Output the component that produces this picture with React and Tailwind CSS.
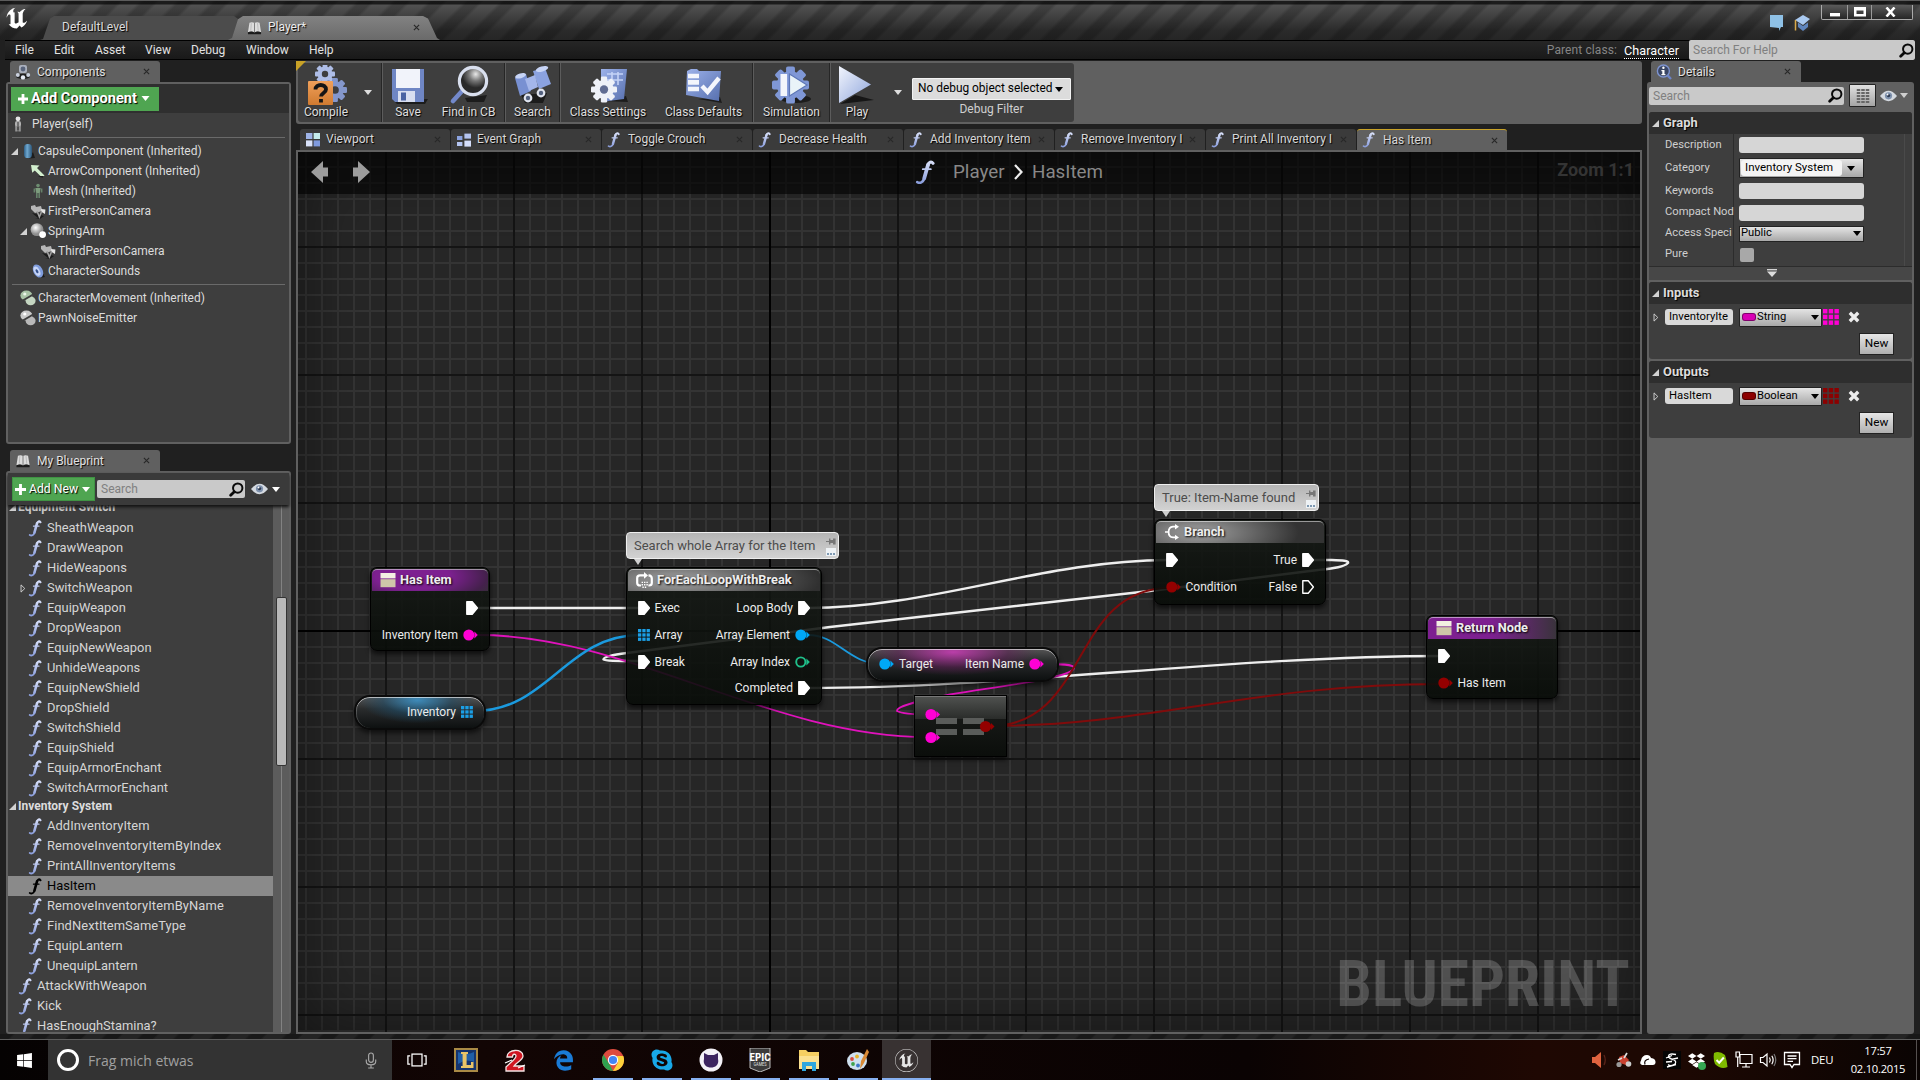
import React from "react";
import { FaWindows, FaEdgeLegacy, FaSkype, FaDropbox } from "react-icons/fa";
import { SiUnrealengine } from "react-icons/si";

/* ---------- small drawings ---------- */
const FnIcon = ({ className = "", black = false }) => (
  <svg viewBox="0 0 14 18" className={`shrink-0 ${className}`} fill="none" stroke={black ? "#000" : "url(#fn)"} strokeLinecap="round">
    <path d="M12.8 2.4C11.6 .8 9.8 1.4 9.2 3.6" strokeWidth="2.2" />
    <path d="M9.2 3.4L6.4 13.4" strokeWidth="2.7" />
    <path d="M6.4 13.4C5.6 16.2 3.4 17 1.4 15.9" strokeWidth="1.9" />
    <path d="M5.4 6.6H11.2" strokeWidth="1.3" />
  </svg>
);
const Tri = ({ className = "" }) => (
  <svg viewBox="0 0 8 8" className={`shrink-0 ${className}`}><path d="M8 0V8H0Z" fill="#d2d2d2" /></svg>
);
const TriClosed = ({ className = "" }) => (
  <svg viewBox="0 0 6 10" className={`shrink-0 ${className}`}><path d="M.8 1V9L5 5Z" fill="none" stroke="#d8d8d8" strokeWidth="1" /></svg>
);
const Down = ({ className = "", color = "#ddd" }) => (
  <svg viewBox="0 0 8 5" className={`shrink-0 ${className}`}><path d="M0 0H8L4 5Z" fill={color} /></svg>
);
const Mag = ({ className = "" }) => (
  <svg viewBox="0 0 16 16" className={`shrink-0 ${className}`} fill="none" stroke="#0a0a0a"><circle cx="9.3" cy="6.5" r="5" strokeWidth="2.1" /><path d="M5.6 10.4L1.8 14.2" strokeWidth="3" strokeLinecap="round" /></svg>
);
const Eye = ({ className = "" }) => (
  <svg viewBox="0 0 18 12" className={`shrink-0 ${className}`}><path d="M0 6Q9 -5 18 6Q9 17 0 6Z" fill="#d4d9e0" /><circle cx="9" cy="5.8" r="3.8" fill="#7d90ac" /><circle cx="9" cy="5.6" r="1.8" fill="#2b3850" /><circle cx="8" cy="4.4" r="1" fill="#fff" /></svg>
);
const Close = ({ className = "" }) => (
  <svg viewBox="0 0 8 8" className={`h-[7px] w-[7px] shrink-0 ${className}`}><path d="M1 1L7 7M7 1L1 7" stroke="#282828" strokeWidth="1.3" /></svg>
);
const Book = ({ className = "" }) => (
  <svg viewBox="0 0 16 16" className={`shrink-0 ${className}`}><path d="M1 13L2.6 3Q5.5 1.6 8 3.2Q10.5 1.6 13.4 3L15 13Q11 11.6 8 13.2Q5 11.6 1 13Z" fill="#dcdcdc" /><path d="M1 13Q5 11.6 8 13.2Q11 11.6 15 13V15.2H1Z" fill="#1c1c1c" /><path d="M8 3.2V13" stroke="#777" strokeWidth="1" /><path d="M4.6 3.4L4 11.4M11.2 3.4L12 11.4" stroke="#b0b0b0" strokeWidth=".8" /></svg>
);
const GearPath = ({ cx, cy, r, fill, hole = "#3e3e3e" }) => (
  <g transform={`translate(${cx} ${cy}) scale(${r / 10})`}>
    {[0, 45, 90, 135].map((a) => <rect key={a} x="-2.4" y="-10" width="4.8" height="20" rx="1" fill={fill} transform={`rotate(${a})`} />)}
    <circle r="7.4" fill={fill} /><circle r="3.2" fill={hole} />
  </g>
);

const SmallIcon = ({ kind, className = "" }) => {
  const body = {
    person: <g><circle cx="8" cy="2.8" r="2.4" fill="#e6e6e6" /><rect x="5" y="5" width="6" height="6" rx="2" fill="#b0b0b0" /><path d="M6.4 10V15.4M9.6 10V15.4" stroke="#949494" strokeWidth="2.4" /><path d="M8 6V14" stroke="#333" strokeWidth="1" /></g>,
    capsule: <g><path d="M9 15.6L15 15L13 9Z" fill="#1d1d1d" /><rect x="4" y="1" width="8" height="14" rx="3.6" fill="url(#cap)" /></g>,
    arrow: <g><path d="M1 2L9.500 2.600L7 5L14.500 12.400L12 14.600L4.800 7.400L2.200 9.800Z" fill="#d3f0cf" /><path d="M8 13H14L12.400 15Z" fill="#1d1d1d" /></g>,
    mesh: <g><circle cx="8" cy="2.600" r="1.800" fill="#6d8d70" /><path d="M5.400 5H10.600L9.800 10H6.200Z" fill="#7d9c7d" /><path d="M4.400 5.400V9.400M11.600 5.400V9.400M6.800 10V15M9.200 10V15" stroke="#66826a" strokeWidth="1.600" /></g>,
    camera: <g><path d="M2 10L8 15H5L10 16L14 13Z" fill="#1b1b1b" /><path d="M1 3L5 2L6 4L11 3L12.400 8L5 10L1 6Z" fill="#b7b7b7" /><path d="M11 6L15.400 6.400L15 11L11.600 9Z" fill="#e6e6e6" /><path d="M7 8L9.400 14L11.400 9" stroke="#a2a2a2" fill="none" strokeWidth="1.500" /></g>,
    spring: <g><circle cx="7" cy="6.600" r="6.400" fill="url(#ball)" /><circle cx="12.600" cy="11.600" r="3.400" fill="#fff" /></g>,
    sound: <g><path d="M9 15L15 14L12 9Z" fill="#1b1b1b" /><ellipse cx="8" cy="8" rx="4.600" ry="7" transform="rotate(-28 8 8)" fill="#7f9cdc" /><ellipse cx="7" cy="8.200" rx="2.800" ry="5" transform="rotate(-28 7 8.200)" fill="#c6d5f8" /><ellipse cx="7" cy="8.200" rx="1.200" ry="2.200" transform="rotate(-28 7 8.200)" fill="#35518c" /></g>,
    move: <g><ellipse cx="6.400" cy="5.600" rx="6" ry="5" fill="#a9c3a6" /><ellipse cx="10.600" cy="10.800" rx="5" ry="4.400" fill="#c5d6c2" /><path d="M2 11L14 4" stroke="#3e3e3e" strokeWidth="2" /><circle cx="4.800" cy="4" r="1.600" fill="#ecf6ea" /></g>,
    noise: <g><ellipse cx="6.400" cy="5.600" rx="6" ry="5" fill="#c9c9c9" /><ellipse cx="10.600" cy="10.800" rx="5" ry="4.400" fill="#b9b9b9" /><path d="M2 11L14 4" stroke="#3e3e3e" strokeWidth="2" /><circle cx="4.800" cy="4" r="1.600" fill="#fff" /></g>,
    components: <g><ellipse cx="8" cy="12.400" rx="7" ry="2.600" fill="#1f1f1f" /><rect x="4" y="1" width="8" height="8" rx="2" fill="#aab0bd" /><circle cx="8" cy="5" r="2.400" fill="#59647c" /><circle cx="2.800" cy="11" r="2" fill="#c9d0dd" /><circle cx="13.200" cy="11" r="2" fill="#c9d0dd" /><circle cx="8" cy="13.400" r="2.200" fill="#e6ebf4" /></g>,
    details: <g><circle cx="7.400" cy="7" r="6" fill="#3a4664" stroke="#7d93cf" strokeWidth="1.400" /><path d="M11.600 11.400L15 15" stroke="#6c84c8" strokeWidth="2.400" /><rect x="6.300" y="6" width="2.200" height="5" fill="#fff" /><rect x="5.400" y="6" width="2" height="1.200" fill="#fff" /><rect x="5.400" y="10" width="4" height="1.200" fill="#fff" /><circle cx="7.400" cy="3.800" r="1.200" fill="#fff" /></g>,
    viewport: <g><rect x="1" y="1" width="6.400" height="6" fill="#9fb4e8" /><rect x="8.600" y="1" width="6.400" height="6" fill="#c4ecec" /><rect x="1" y="8.400" width="6.400" height="6" fill="#d9e2fa" /><rect x="8.600" y="8.400" width="6.400" height="6" fill="#7f9ade" /></g>,
    graph: <g><rect x="1" y="4" width="5.400" height="4" fill="#8ba3e0" /><rect x="8.400" y="1.600" width="6.600" height="5" fill="#b4c4f0" /><rect x="1" y="10" width="5.400" height="4" fill="#b4c4f0" /><rect x="8.400" y="8.600" width="6.600" height="6" fill="#d5defa" /></g>,
  }[kind];
  return <svg viewBox="0 0 16 16" className={`h-4 w-4 shrink-0 ${className}`}>{body}</svg>;
};

const ToolIcon = ({ kind }) => {
  const body = {
    compile: <g><GearPath cx={21} cy={9} r={10} fill="#aebde6" /><GearPath cx={31} cy={25} r={12} fill="#8497cc" /><rect x="4" y="16" width="25" height="24" rx="1" fill="url(#org)" /><path d="M11.500 24.500C11.500 18.500 22 18.500 22 24.500C22 28 17 28 17 31.600M17 34V37.600" stroke="#151515" strokeWidth="3.800" fill="none" /></g>,
    save: <g><path d="M7 35L42 34L39 39H11Z" fill="#1c1c1c" /><path d="M6 4H38V37H9L6 34Z" fill="#6f86c4" /><rect x="10" y="4" width="24" height="19" fill="#f1f3fa" /><rect x="12" y="26" width="17" height="11" fill="#d8def0" /><rect x="15" y="27.500" width="5" height="8" fill="#4a62a2" /></g>,
    find: <g><path d="M18 33L40 30L37 37L20 37Z" fill="#1c1c1c" /><path d="M16 25L6 36" stroke="#7389cb" strokeWidth="4.600" strokeLinecap="round" /><circle cx="26" cy="16" r="13.600" fill="url(#lens)" stroke="#d9dfee" strokeWidth="3.200" /></g>,
    search: <g><path d="M10 30L36 28L32 38H14Z" fill="#1c1c1c" /><path d="M4 13L15 9L20 26L9 31Z" fill="#7890d2" /><path d="M22 6L34 3L40 19L28 24Z" fill="#8ba2e0" /><path d="M14 14L24 10L27 22L18 26Z" fill="#a4b6ea" /><ellipse cx="31" cy="4" rx="6.400" ry="2.600" fill="#c7d4f6" transform="rotate(-16 31 4)" /><ellipse cx="9.600" cy="11" rx="5.600" ry="2.400" fill="#c7d4f6" transform="rotate(-16 9 11)" /><circle cx="17" cy="33" r="4.400" fill="#dfe3ee" /><circle cx="17" cy="33" r="2.200" fill="#53617f" /><circle cx="30" cy="28" r="4.400" fill="#dfe3ee" /><circle cx="30" cy="28" r="2.200" fill="#53617f" /></g>,
    settings: <g><path d="M18 36L42 37L40 31Z" fill="#1c1c1c" /><path d="M15 4H41L38 34L15 37Z" fill="url(#blu)" /><path d="M21 9H37M21 15H37M26 7V20M32 7V20" stroke="#c5d3f7" strokeWidth="1.600" /><GearPath cx={18} cy={24.500} r={13} fill="#eef1f8" hole="#606c92" /></g>,
    defaults: <g><path d="M16 34L40 38L38 32Z" fill="#1c1c1c" /><path d="M5 6L9 4L15 4L17 6H39L37 36L4 30Z" fill="url(#blu)" /><path d="M6 11H17M6 17.400H17M6 24H17" stroke="#f4f6fc" strokeWidth="4.600" /><path d="M20 21L25.600 27L37 13" stroke="#f4f6fc" strokeWidth="4.400" fill="none" /></g>,
    sim: <g><ellipse cx="26" cy="34" rx="15" ry="4" fill="#1c1c1c" /><GearPath cx={20.5} cy={20} r={18.5} fill="#7f97d6" hole="#7f97d6" /><rect x="10.500" y="9" width="6.600" height="22" fill="#f3f5fb" /><path d="M19.500 9L37 20L19.500 31Z" fill="#e9f3f8" stroke="#5d76b6" strokeWidth="1.200" /></g>,
    play: <g><path d="M5 39L20 30L39 35Z" fill="#161616" /><path d="M4 1L36 19.500L4 38Z" fill="url(#ply)" /></g>,
  }[kind];
  return <svg viewBox="0 0 44 40" className="h-[40px] w-[44px]">{body}</svg>;
};

const Tool = ({ kind, label, className }) => (
  <div className={`flex h-full shrink-0 flex-col items-center pt-[2px] ${className}`}>
    <ToolIcon kind={kind} />
    <span className="text-[12px] leading-[14px] whitespace-nowrap text-[#dedede] [text-shadow:1px_1px_1px_#000]">{label}</span>
  </div>
);
const Sep = () => <div className="h-full w-[2px] shrink-0 border-r border-[#5c5c5c] bg-[#262626]" />;

/* ---------- left column ---------- */
const PanelTab = ({ icon, label }) => (
  <div className="ml-1 flex h-[21px] w-[150px] items-center rounded-t-[3px] bg-[#606060] pl-[5px]">
    {icon}
    <span className="ml-[6px] flex-1 text-[12px] leading-[16px] text-[#e2e2e2] [text-shadow:1px_1px_1px_#000]">{label}</span>
    <Close className="mr-[10px]" />
  </div>
);

const components = [
  { kind: "arrow", label: "ArrowComponent (Inherited)", pad: "pl-[22px]" },
  { kind: "mesh", label: "Mesh (Inherited)", pad: "pl-[22px]" },
  { kind: "camera", label: "FirstPersonCamera", pad: "pl-[22px]" },
  { kind: "spring", label: "SpringArm", pad: "pl-[12px]", open: true },
  { kind: "camera", label: "ThirdPersonCamera", pad: "pl-[32px]" },
  { kind: "sound", label: "CharacterSounds", pad: "pl-[22px]" },
];

const ComponentsPanel = () => (
  <div className="flex h-[362px] flex-col rounded-[3px] border-2 border-[#606060] bg-[#3e3e3e] text-[12px] text-[#dcdcdc]">
    <div className="flex h-[29px] shrink-0 items-center bg-[#2f2f2f] pl-[3px]">
      <div className="flex h-[24px] w-[148px] items-center bg-[#4fa551] pl-[7px] text-[14.600px] font-bold text-white [text-shadow:1px_1px_1px_#000]">
        <svg viewBox="0 0 10 10" className="mr-[3px] h-[10px] w-[10px]"><path d="M5 0V10M0 5H10" stroke="#fff" strokeWidth="2.800" /></svg>
        Add Component
        <Down className="ml-[4px] h-[5px] w-[9px]" color="#fff" />
      </div>
    </div>
    <div className="flex h-[24px] shrink-0 items-center pb-[2px] pl-[2px]"><SmallIcon kind="person" /><span className="ml-[6px]">Player(self)</span></div>
    <div className="mx-[4px] h-px shrink-0 bg-[#6a6a6a]" />
    <div className="mt-[3px] flex h-[20px] shrink-0 items-center pl-[3px]"><Tri className="h-[7px] w-[7px]" /><SmallIcon kind="capsule" className="ml-[2px]" /><span className="ml-[2px]">CapsuleComponent (Inherited)</span></div>
    {components.map((c, i) => (
      <div key={i} className={`flex h-[20px] shrink-0 items-center ${c.pad}`}>
        {c.open && <Tri className="mr-[3px] h-[7px] w-[7px]" />}
        <SmallIcon kind={c.kind} /><span className="ml-[2px]">{c.label}</span>
      </div>
    ))}
    <div className="mx-[4px] mt-[3px] h-px shrink-0 bg-[#6a6a6a]" />
    <div className="mt-[3px] flex h-[20px] shrink-0 items-center pl-[12px]"><SmallIcon kind="move" /><span className="ml-[2px]">CharacterMovement (Inherited)</span></div>
    <div className="flex h-[20px] shrink-0 items-center pl-[12px]"><SmallIcon kind="noise" /><span className="ml-[2px]">PawnNoiseEmitter</span></div>
  </div>
);

const equipFns = ["SheathWeapon", "DrawWeapon", "HideWeapons", "SwitchWeapon", "EquipWeapon", "DropWeapon", "EquipNewWeapon", "UnhideWeapons", "EquipNewShield", "DropShield", "SwitchShield", "EquipShield", "EquipArmorEnchant", "SwitchArmorEnchant"];
const invFns = ["AddInventoryItem", "RemoveInventoryItemByIndex", "PrintAllInventoryItems", "HasItem", "RemoveInventoryItemByName", "FindNextItemSameType", "EquipLantern", "UnequipLantern"];
const track = { RemoveInventoryItemByIndex: "tracking-[.16px]", RemoveInventoryItemByName: "tracking-[.14px]", PrintAllInventoryItems: "tracking-[.08px]", AddInventoryItem: "tracking-[.06px]", FindNextItemSameType: "tracking-[.08px]" };

const FnRow = ({ name, root = false }) => {
  const sel = name === "HasItem";
  return (
    <div className={`flex h-[20px] shrink-0 items-center ${root ? "pl-[10px]" : "pl-[12px]"} ${sel ? "bg-[#8a8a8a] text-black" : ""}`}>
      {!root && <span className="w-[8px]">{name === "SwitchWeapon" && <TriClosed className="h-[9px] w-[6px]" />}</span>}
      <FnIcon className="h-[17px] w-[14px]" black={sel} />
      <span className={`ml-[5px] ${track[name] || ""}`}>{name}</span>
    </div>
  );
};

const SearchBox = ({ className, label }) => (
  <div className={`flex items-center justify-between rounded-[2px] bg-[#c9c9c9] pr-px pl-[4px] text-[12px] text-[#808080] ${className}`}>{label}<Mag className="h-[15px] w-[15px]" /></div>
);

const BlueprintPanel = () => (
  <div className="flex h-[563px] flex-col rounded-[3px] border-2 border-[#606060] bg-[#3e3e3e]">
    <div className="z-10 flex h-[32px] shrink-0 items-center bg-[#3a3a3a] pl-[4px] shadow-[0_2px_3px_#111]">
      <div className="flex h-[24px] w-[83px] items-center border border-[#3f9343] bg-[#4fa551] pl-[2px] text-[12px] text-white [text-shadow:1px_1px_1px_#000]">
        <svg viewBox="0 0 10 10" className="mr-[3px] h-[11px] w-[11px]"><path d="M5 0V10M0 5H10" stroke="#fff" strokeWidth="2.600" /></svg>
        <span className="text-[12.200px] whitespace-nowrap">Add New</span>
        <Down className="ml-[4px] h-[5px] w-[8px]" color="#fff" />
      </div>
      <SearchBox label="Search" className="ml-[2px] h-[18px] w-[148px]" />
      <Eye className="ml-[6px] h-[12px] w-[17px]" />
      <Down className="ml-[4px] h-[5px] w-[8px]" color="#fff" />
    </div>
    <div className="flex min-h-0 flex-1 overflow-hidden">
      <div className="flex w-[265px] flex-col overflow-hidden text-[12.900px] text-[#d6d6d6]">
        <div className="mt-[-9px] flex h-[22px] shrink-0 items-center pl-px text-[12px] font-bold text-[#c9c9c9]"><Tri className="mr-[2px] h-[7px] w-[7px]" />Equipment Switch</div>
        {equipFns.map((n) => <FnRow key={n} name={n} />)}
        <div className="-mt-px mb-px flex h-[18px] shrink-0 items-center pl-px text-[12px] font-bold text-[#dcdcdc]"><Tri className="mr-[2px] h-[7px] w-[7px]" />Inventory System</div>
        {invFns.map((n) => <FnRow key={n} name={n} />)}
        {["AttackWithWeapon", "Kick", "HasEnoughStamina?"].map((n) => <FnRow key={n} name={n} root />)}
      </div>
      <div className="flex flex-1 flex-col bg-[linear-gradient(90deg,#5c5c5c_8px,#828282_8px,#828282_9px,#5c5c5c_9px)] pt-[92px] pl-[3px]">
        <div className="h-[169px] w-[11px] rounded-[2px] border border-[#333] bg-[#b9b9b9]" />
      </div>
    </div>
  </div>
);

/* ---------- graph ---------- */
const ExecPin = ({ hollow = false }) => (
  <svg viewBox="0 0 12 14" className="h-[14px] w-[12px] shrink-0"><path d="M.8 .8H6.200L11.400 7L6.200 13.200H.8Z" fill={hollow ? "none" : "#fff"} stroke="#fff" strokeWidth="1.400" strokeLinejoin="round" /></svg>
);
const Pin = ({ color, hollow = false }) => (
  <svg viewBox="0 0 15 12" className="h-[12px] w-[15px] shrink-0"><circle cx="5.800" cy="6" r={hollow ? 4.6 : 5.5} fill={hollow ? "none" : color} stroke={hollow ? color : "none"} strokeWidth="1.900" /><path d="M11.400 2.600L14.800 6L11.400 9.400Z" fill={color} /></svg>
);
const ArrayPin = ({ color = "#1b9fe6", className = "h-[12px] w-[12px]" }) => (
  <svg viewBox="0 0 12 12" className={`shrink-0 ${className}`}>{[0, 4.3, 8.6].map((y) => [0, 4.3, 8.6].map((x) => <rect key={x + "-" + y} x={x} y={y} width="3.300" height="3.300" fill={color} />))}</svg>
);
const MAG = "#ff00d4", BLUE = "#00a8f6", RED = "#940000";

const Row = ({ children }) => <div className="flex h-[26.700px] items-center justify-between pr-[11px] pl-[10.500px]">{children}</div>;
const In = ({ children }) => <div className="flex items-center gap-[5px]">{children}</div>;

const Node = ({ className, header, icon, title, children }) => (
  <div className={`absolute overflow-hidden rounded-[7px] border border-black bg-[linear-gradient(180deg,rgba(22,26,22,.88),rgba(8,12,8,.9))] shadow-[0_3px_5px_rgba(0,0,0,.65)] ${className}`}>
    <div className={`mx-px mt-px flex h-[22px] items-center rounded-t-[5px] border-t border-white/50 pb-[2px] pl-[8px] ${header}`}>
      {icon}<span className="ml-[4px] text-[12.800px] leading-[18px] font-bold whitespace-nowrap text-[#eee] [text-shadow:1px_1px_2px_#000]">{title}</span>
    </div>
    <div className="pt-[4px]">{children}</div>
  </div>
);
const FnBox = () => <svg viewBox="0 0 16 16" className="h-[16px] w-[16px] shrink-0"><rect x=".5" y="1" width="15" height="5.400" fill="#f3efe2" /><rect x=".5" y="7.200" width="15" height="8" fill="#cfc6a9" /></svg>;
const LoopIcon = () => <svg viewBox="0 0 17 16" className="h-[16px] w-[17px] shrink-0" fill="none" stroke="#fff" strokeWidth="2.200"><path d="M5 13.500H4Q1.200 13.500 1.200 11V6Q1.200 3.400 4 3.400H8" /><path d="M8 0L12 3.400L8 6.800Z" fill="#fff" stroke="none" /><path d="M12.500 3.400Q15.800 3.600 15.800 6.400V11Q15.800 13.500 13 13.500H12.400" /><path d="M5.600 10.400H12M5.600 12.800H12M6.400 15.200H11" strokeDasharray="1.400 1" strokeWidth="1.400" /></svg>;
const BranchIcon = () => <svg viewBox="0 0 16 16" className="h-[16px] w-[16px] shrink-0" fill="none" stroke="#fff" strokeWidth="1.700"><path d="M1 8H5M12 2.600H9Q4.600 3 4.600 8Q4.600 13 9 13.400H12" /><path d="M11 0L15 2.700L11 5.400ZM11 10.700L15 13.400L11 16Z" fill="#fff" stroke="none" /></svg>;

const Bubble = ({ className, children }) => (
  <div className={`absolute flex h-[27px] items-center rounded-[4px] border border-[#eee] bg-[linear-gradient(180deg,#b4b4b4,#d2d2d2)] pl-[7px] text-[13px] whitespace-nowrap text-[#4c4c4c] ${className}`}>
    {children}
    <svg viewBox="0 0 10 20" className="absolute top-[4px] right-[2px] h-[20px] w-[10px]"><path d="M0 4.500H3.500" stroke="#777" strokeWidth="1" /><path d="M3 1.500H4.400V3H7V1.500H9.600V7.500H7V6H4.400V7.500H3Z" fill="#777" /><rect x="0" y="11" width="10" height="8" fill="#eef2f5" /><path d="M1 17H9" stroke="#5a7c9c" strokeWidth="1.600" strokeDasharray="2 1" /></svg>
    <svg viewBox="0 0 8 6" className="absolute top-[26px] left-[7px] h-[6px] w-[8px]"><path d="M0 0H8L4 6Z" fill="#cfcfcf" /></svg>
  </div>
);

const Pill = ({ className, glow, children }) => (
  <div className={`absolute flex h-[35px] items-center rounded-[16px] border-2 border-[#0a0a0a] pb-[2px] shadow-[0_3px_5px_rgba(0,0,0,.6),inset_0_1px_0_rgba(255,255,255,.6),inset_1px_0_0_rgba(255,255,255,.2)] ${glow} ${className}`}>{children}</div>
);

const Wires = () => (
  <svg viewBox="0 0 1920 1080" className="absolute top-0 left-0 h-[1080px] w-[1920px]" fill="none">
    <g stroke="#eee" strokeWidth="2.400">
      <path d="M476 608H640" />
      <path d="M808 608C930 608 1045 560 1168 560" />
      <path d="M1313 560H1330C1342 560.400 1349 560.500 1348 563C1344 567 1335 568 1318 570L1154 590.500L830 627C740 638 690 645 627 653C612 655 603 657 603.500 659.500C605 661 615 661 640 661" />
      <path d="M808 688C1010 688 1230 656 1443 656" />
    </g>
    <g stroke="#e012bc" strokeWidth="1.800">
      <path d="M478 635C630 635 770 737 928 737" />
      <path d="M1041 664C1060 664 1074 664 1074 668C1072 678 1000 686 950 694.500C918 701 896 706 897 711C902 714 912 714.500 930 714.500" />
    </g>
    <path d="M474 711C548 711 566 635 640 635" stroke="#1b9ade" strokeWidth="2.400" />
    <path d="M808 635C838 635 848 664 882 664" stroke="#1b9ade" strokeWidth="1.800" />
    <g stroke="#800b0b" strokeWidth="2">
      <path d="M990 726C1090 726 1070 588 1170 588" />
      <path d="M990 726C1150 726 1250 684 1443 684" />
    </g>
  </svg>
);

const Graph = () => (
  <div className="relative min-h-0 flex-1 overflow-hidden border-2 border-[#606060] bg-[#262626]">
    <div className="absolute inset-0 bg-[linear-gradient(90deg,#141414_2px,transparent_2px),linear-gradient(180deg,#141414_2px,transparent_2px),linear-gradient(90deg,#343434_2px,transparent_2px),linear-gradient(180deg,#343434_2px,transparent_2px)] [background-position:87px_0,0_94px,7px_0,0_14px] [background-size:128px_128px,128px_128px,16px_16px,16px_16px]" />
    <div className="absolute inset-y-0 left-[471px] w-[2px] bg-black" />
    <div className="absolute inset-x-0 top-[478px] h-[2px] bg-black" />
    <div className="absolute inset-0 shadow-[inset_0_0_70px_rgba(0,0,0,.5)]" />
    <div className="absolute right-[10px] bottom-[15px] origin-right scale-x-[.992] font-['Roboto_Condensed',Roboto,sans-serif] text-[64px] leading-[64px] font-bold text-white/20">BLUEPRINT</div>

    <div className="absolute top-[-152px] left-[-298px] h-[1080px] w-[1920px] text-[12px] whitespace-nowrap text-[#ececec]">
      <Wires />
      <Node className="top-[567px] left-[370px] h-[84px] w-[120px]" header="bg-[radial-gradient(ellipse_80%_160%_at_35%_30%,#7d2090_40%,#44204c_80%,#333_100%)]" icon={<FnBox />} title="Has Item">
        <Row><span /><ExecPin /></Row>
        <Row><span /><In>Inventory Item<Pin color={MAG} /></In></Row>
      </Node>
      <Node className="top-[567px] left-[626px] h-[138px] w-[196px]" header="bg-[radial-gradient(ellipse_75%_160%_at_25%_50%,#8c8c8c_20%,#505050_70%,#303030_100%)]" icon={<LoopIcon />} title="ForEachLoopWithBreak">
        <Row><In><ExecPin />Exec</In><In>Loop Body<ExecPin /></In></Row>
        <Row><In><ArrayPin />Array</In><In>Array Element<Pin color={BLUE} /></In></Row>
        <Row><In><ExecPin />Break</In><In>Array Index<Pin color="#1fc08a" hollow /></In></Row>
        <Row><span /><In>Completed<ExecPin /></In></Row>
      </Node>
      <Node className="top-[519px] left-[1154px] h-[86px] w-[172px]" header="bg-[radial-gradient(ellipse_60%_160%_at_25%_50%,#8c8c8c_20%,#4a4a4a_80%,#333_100%)]" icon={<BranchIcon />} title="Branch">
        <Row><ExecPin /><In>True<ExecPin /></In></Row>
        <Row><In><Pin color={RED} />Condition</In><In>False<ExecPin hollow /></In></Row>
      </Node>
      <Node className="top-[615px] left-[1426px] h-[84px] w-[132px]" header="bg-[linear-gradient(90deg,#7d2090_50%,#3a333c_100%)]" icon={<FnBox />} title="Return Node">
        <Row><ExecPin /></Row>
        <Row><In><Pin color={RED} />Has Item</In></Row>
      </Node>
      <Pill className="top-[695px] left-[354px] w-[132px] justify-end gap-[5px] pr-[11px]" glow="bg-[radial-gradient(ellipse_45%_75%_at_48%_10%,rgba(60,150,205,.85),rgba(30,80,110,.5)_60%,transparent),linear-gradient(180deg,#555_0,#2a2c2d_38%,#0d1010_100%)]">Inventory<ArrayPin /></Pill>
      <Pill className="top-[647px] left-[866px] w-[193px] justify-between pr-[13px] pl-[11px]" glow="bg-[radial-gradient(ellipse_45%_75%_at_45%_10%,rgba(205,60,185,.85),rgba(100,30,90,.5)_65%,transparent),linear-gradient(180deg,#555_0,#2a2c2d_38%,#0d1010_100%)]">
        <In><Pin color={BLUE} />Target</In><In>Item Name<Pin color={MAG} /></In>
      </Pill>
      <div className="absolute top-[695px] left-[914px] h-[62px] w-[93px] border border-black bg-[linear-gradient(180deg,#505250_0,#2a2c2a_38%,#161816_39%,#0b0e0b_100%)] shadow-[0_3px_5px_rgba(0,0,0,.6),inset_0_1px_0_#777]">
        <svg viewBox="0 0 93 62" className="absolute top-[-1px] left-[-1px] h-[62px] w-[93px]">
          <path d="M22 26H43M49 26H70M22 37H43M49 37H70" stroke="#5a5c5a" strokeWidth="6" />
          <circle cx="17" cy="19.500" r="5.600" fill={MAG} /><path d="M22.500 16L26 19.500L22.500 23Z" fill={MAG} />
          <circle cx="17" cy="42.500" r="5.600" fill={MAG} /><path d="M22.500 39L26 42.500L22.500 46Z" fill={MAG} />
          <circle cx="71.500" cy="31.500" r="5.600" fill={RED} /><path d="M77 28L80.500 31.500L77 35Z" fill={RED} />
        </svg>
      </div>
      <Bubble className="top-[532px] left-[626px] w-[213px]">Search whole Array for the Item</Bubble>
      <Bubble className="top-[484px] left-[1154px] w-[165px]">True: Item-Name found</Bubble>
    </div>

    <div className="relative flex h-[42px] items-center bg-black/60 pb-[2px] text-[18.800px] text-[#888]">
      <svg viewBox="0 0 64 24" className="ml-[12px] h-[24px] w-[64px] shrink-0"><path d="M1 12L13 1V7.500H18V16.500H13V23Z" fill="#9c9c9c" /><path d="M60 12L48 1V7.500H43V16.500H48V23Z" fill="#9c9c9c" /></svg>
      <FnIcon className="ml-[541px] h-[25px] w-[20px]" />
      <span className="ml-[18px] w-[54px]">Player</span>
      <svg viewBox="0 0 10 16" className="ml-[6px] h-[16px] w-[11px]"><path d="M1.500 1L8 8L1.500 15" stroke="#eee" strokeWidth="2.200" fill="none" /></svg>
      <span className="ml-[8px] flex-1">HasItem</span>
      <span className="mr-[6px] -mt-[5px] text-[18px] font-bold text-[#343434]">Zoom 1:1</span>
    </div>
  </div>
);

/* ---------- centre ---------- */
const tabs = ["Viewport", "Event Graph", "Toggle Crouch", "Decrease Health", "Add Inventory Item", "Remove Inventory I", "Print All Inventory I", "Has Item"];
const Centre = () => (
  <div className="flex w-[1346px] flex-col">
    <div className="flex h-[63px] shrink-0 rounded-[3px] bg-[#606060] p-[2px]">
      <div className="relative flex h-[59px] w-[776px] rounded-[3px] bg-[#3e3e3e]">
        <svg viewBox="0 0 10 10" className="absolute top-[-2px] left-[-2px] h-[10px] w-[10px]"><path d="M0 0H10L0 10Z" fill="#c9a227" /></svg>
        <Tool kind="compile" label="Compile" className="w-[56px]" />
        <div className="flex w-[27px] items-center justify-center"><Down className="h-[5px] w-[8px]" /></div>
        <Sep />
        <Tool kind="save" label="Save" className="w-[50px]" />
        <Tool kind="find" label="Find in CB" className="w-[71px]" />
        <Sep />
        <Tool kind="search" label="Search" className="w-[53px]" />
        <Sep />
        <Tool kind="settings" label="Class Settings" className="w-[94px]" />
        <Tool kind="defaults" label="Class Defaults" className="w-[97px]" />
        <Sep />
        <Tool kind="sim" label="Simulation" className="w-[75px]" />
        <Sep />
        <Tool kind="play" label="Play" className="w-[52px]" />
        <div className="flex w-[29px] items-center justify-center"><Down className="h-[5px] w-[8px]" /></div>
        <div className="flex flex-col items-center pt-[15px]">
          <div className="flex h-[22px] w-[159px] items-center rounded-[1px] border border-[#f2f2f2] bg-[#dcdcdc] pl-[5px] text-[11.900px] whitespace-nowrap text-black">No debug object selected<Down className="ml-[2px] h-[5px] w-[8px]" color="#000" /></div>
          <span className="mt-[2px] text-[12px] leading-[14px] text-[#cfcfcf]">Debug Filter</span>
        </div>
      </div>
    </div>
    <div className="flex h-[26px] shrink-0 items-end pl-[4px]">
      {tabs.map((t, i) => {
        const on = i === 7;
        return (
          <div key={t} className={`mr-px flex h-[21px] w-[150px] shrink-0 items-center rounded-t-[3px] pl-[5px] ${on ? "border-t border-[#c9a227] bg-[#606060]" : "bg-[#3b3b3b]"}`}>
            {i < 2 ? <SmallIcon kind={i ? "graph" : "viewport"} className="mr-[5px]" /> : <FnIcon className="mr-[8px] h-[16px] w-[13px]" />}
            <span className="w-[105px] pb-px text-[12px] leading-[16px] whitespace-nowrap text-[#d8d8d8] [text-shadow:1px_1px_1px_#000]">{t}</span>
            <Close className="ml-[3px]" />
          </div>
        );
      })}
    </div>
    <Graph />
  </div>
);

/* ---------- details ---------- */
const SectionHead = ({ children }) => (
  <div className="flex h-[22px] shrink-0 items-center rounded-t-[3px] bg-[#2e2e2e] pl-[3px] text-[12.900px] font-bold text-[#dcdcdc] [text-shadow:1px_1px_1px_#000]"><Tri className="mr-[4px] h-[7px] w-[7px]" />{children}</div>
);
const Field = ({ label, h, children }) => (
  <div className={`flex items-center ${h}`}>
    <span className="w-[84px] pl-[16px] whitespace-nowrap">{label}</span>
    <div className="ml-[6px]">{children}</div>
  </div>
);
const Blank = () => <div className="h-[16px] w-[125px] rounded-[3px] bg-[#d6d6d6]" />;
const Param = ({ name, type, color, pill }) => (
  <div className="flex h-[56px] flex-col">
    <div className="flex h-[26px] items-center pl-[4px] text-black">
      <TriClosed className="h-[9px] w-[6px]" />
      <div className="ml-[6px] h-[16px] w-[68px] rounded-[3px] bg-[#d9d9d9] pl-[4px] text-[11.300px] leading-[15px] whitespace-nowrap">{name}</div>
      <div className="ml-[6px] flex h-[19px] w-[83px] items-center rounded-[1px] border border-[#222] bg-[linear-gradient(180deg,#e4e4e4,#a8a8a8)] pl-[2px] text-[11.200px]">
        <span className={`h-[8px] w-[14px] rounded-[3px] border border-black/40 ${pill}`} /><span className="ml-px flex-1">{type}</span><Down className="mr-[2px] h-[5px] w-[8px]" color="#000" />
      </div>
      <ArrayPin color={color} className="ml-[1px] h-[16px] w-[16px]" />
      <svg viewBox="0 0 10 10" className="ml-[9px] h-[12px] w-[12px]"><path d="M1.500 1.500L8.500 8.500M8.500 1.500L1.500 8.500" stroke="#ececec" strokeWidth="2.800" /></svg>
    </div>
    <div className="mt-[3px] ml-[210px] flex h-[22px] w-[35px] items-center justify-center border border-[#222] bg-[linear-gradient(180deg,#e6e6e6,#b0b0b0)] text-[11.800px] text-black">New</div>
  </div>
);
const Details = () => (
  <div className="flex w-[267px] flex-col">
    <PanelTab icon={<SmallIcon kind="details" />} label="Details" />
    <div className="flex flex-1 flex-col rounded-[3px] bg-[#606060] pl-[2px] text-[11.200px] text-[#cfcfcf]">
      <div className="flex h-[30px] shrink-0 items-center pt-[2px] pb-[5px]">
        <SearchBox label="Search" className="h-[18px] w-[195px]" />
        <div className="ml-[5px] flex h-[23px] w-[27px] items-center justify-center rounded-[1px] border border-[#222] bg-[linear-gradient(180deg,#e0e0e0,#a4a4a4)]">
          <svg viewBox="0 0 14 14" className="h-[14px] w-[14px]"><path d="M2.500 0V14M7 0V14M11.500 0V14" stroke="#666" strokeWidth="3.500" strokeDasharray="2 1" /></svg>
        </div>
        <Eye className="ml-[4px] h-[12px] w-[17px]" /><Down className="ml-[3px] h-[5px] w-[8px]" color="#cfcfcf" />
      </div>
      <div className="flex h-[168px] w-[263px] flex-col rounded-[3px] bg-[#3e3e3e]">
        <SectionHead>Graph</SectionHead>
        <div className="flex h-[132px] flex-col bg-[linear-gradient(90deg,transparent_84px,#2c2c2c_84px,#2c2c2c_85px,transparent_85px,transparent_255px,#4a4a4a_255px,#4a4a4a_256px,transparent_256px)]">
          <Field label="Description" h="h-[22px]"><Blank /></Field>
          <Field label="Category" h="h-[24px]">
            <div className="flex h-[20px] w-[125px] items-center justify-between rounded-[1px] border border-[#222] bg-[linear-gradient(180deg,#e4e4e4,#a8a8a8)] p-px pr-[8px] text-[11.500px] text-black"><span className="flex h-full w-[101px] items-center rounded-[3px] bg-[#f4f4f4] pl-[4px] whitespace-nowrap">Inventory System</span><Down className="h-[5px] w-[8px]" color="#000" /></div>
          </Field>
          <Field label="Keywords" h="h-[22px]"><Blank /></Field>
          <Field label="Compact Nod" h="h-[21px]"><Blank /></Field>
          <Field label="Access Speci" h="h-[21px]"><div className="flex h-[16px] w-[125px] items-center justify-between border border-[#222] bg-[linear-gradient(180deg,#e4e4e4,#a8a8a8)] pr-[2px] pl-px text-black">Public<Down className="h-[5px] w-[8px]" color="#000" /></div></Field>
          <Field label="Pure" h="h-[21px]"><div className="ml-px h-[14px] w-[14px] rounded-[2px] bg-[#a8a8a8]" /></Field>
        </div>
        <div className="flex flex-1 items-center border-t border-[#2c2c2c] bg-[#474747] pb-[2px]"><svg viewBox="0 0 10 8" className="ml-[118px] h-[8px] w-[10px]"><path d="M0 .7H10" stroke="#ddd" strokeWidth="1.300" /><path d="M0 2.600H10L5 8Z" fill="#ddd" /></svg></div>
      </div>
      <div className="mt-[2px] h-[77px] w-[263px] rounded-[3px] bg-[#3e3e3e]"><SectionHead>Inputs</SectionHead><Param name="InventoryIte" type="String" color="#ff00d4" pill="bg-[#d800b4]" /></div>
      <div className="mt-[2px] h-[77px] w-[263px] rounded-[3px] bg-[#3e3e3e]"><SectionHead>Outputs</SectionHead><Param name="HasItem" type="Boolean" color="#8c0000" pill="bg-[#8c0000]" /></div>
    </div>
  </div>
);

/* ---------- title bar and menu ---------- */
const TitleBar = () => (
  <div className="flex h-[40px] shrink-0 border-t border-[#5c5c5c] bg-[repeating-linear-gradient(135deg,rgba(0,0,0,.2)_0,rgba(0,0,0,.2)_8px,transparent_11px,transparent_22px,rgba(0,0,0,.2)_25.500px),linear-gradient(180deg,#1c1c1c_0,#1c1c1c_3px,#525252_4px,#2a2a2a_30px,#262626_100%)]">
    <div className="mt-[2px] ml-[2px] flex h-[30px] w-[30px] items-center justify-center"><SiUnrealengine className="h-[34px] w-[34px] shrink-0 text-white [clip-path:circle(43%)]" /></div>
    <div className="flex pt-[15px]">
      <div className="z-0 ml-[8px] flex h-[24px] w-[204px] items-center bg-[#4c4c4c] pb-[2px] pl-[22px] text-[12px] text-[#dcdcdc] [clip-path:polygon(0_100%,3px_96%,10px_10%,14px_0,calc(100%-10px)_0,100%_30%,100%_100%)] [text-shadow:1px_1px_1px_#000]">DefaultLevel</div>
      <div className="z-10 ml-[-16px] flex h-[24px] w-[212px] items-center bg-[linear-gradient(180deg,#828282,#6a6a6a)] pb-[2px] pl-[19px] text-[12px] text-[#ededed] [clip-path:polygon(0_100%,4px_92%,10px_14%,15px_0,calc(100%-17px)_0,calc(100%-12px)_10%,calc(100%-3px)_92%,100%_100%)] [text-shadow:1px_1px_1px_#000]"><Book className="mr-[6px] h-[15px] w-[15px]" /><span className="flex-1">Player*</span><Close className="mr-[20px]" /></div>
    </div>
    <div className="flex-1" />
    <svg viewBox="0 0 44 18" className="mt-[13px] mr-[9px] h-[18px] w-[44px]">
      <path d="M2 1H15V13H13L11 17V14L2 13Z" fill="#8fc1e6" /><path d="M27 6L35 1L42 5L35 11Z" fill="#a9c9f0" /><path d="M30 8.500L35 12L40 8.500V13L35 17L30 13Z" fill="#5f85bd" /><path d="M27.500 6V16.500" stroke="#d9a94a" strokeWidth="1.500" />
    </svg>
    <div className="mt-[4px] mr-[7px] flex h-[15px] w-[92px] divide-x divide-[#999] rounded-b-[2px] border border-t-0 border-[#aaa] bg-[linear-gradient(180deg,#5a5a5a,#262626)]">
      <div className="flex w-[26px] items-center justify-center"><svg viewBox="0 0 12 10" className="h-[10px] w-[12px]"><rect x="1" y="6" width="10" height="3.400" fill="#fff" /></svg></div>
      <div className="flex w-[24px] items-center justify-center"><svg viewBox="0 0 12 10" className="h-[10px] w-[12px]"><path d="M0 0H12V9.500H0ZM2.500 3.500H9.500V7H2.500Z" fill="#fff" fillRule="evenodd" /></svg></div>
      <div className="flex flex-1 items-center justify-center pr-[3px]"><svg viewBox="0 0 10 10" className="h-[10px] w-[11px]"><path d="M1 .5L9 9.500M9 .5L1 9.500" stroke="#fff" strokeWidth="2.600" /></svg></div>
    </div>
  </div>
);
const menu = [["File", "w-[39px]"], ["Edit", "w-[41px]"], ["Asset", "w-[50px]"], ["View", "w-[46px]"], ["Debug", "w-[55px]"], ["Window", "w-[63px]"], ["Help", "flex-1"]];
const MenuBar = () => (
  <div className="mx-[5px] flex h-[20px] shrink-0 items-center border-y border-black bg-[linear-gradient(180deg,#262626,#191919)] text-[12px] text-[#e2e2e2]">
    <div className="flex w-[900px] pl-[10px]">{menu.map(([m, w]) => <span key={m} className={w}>{m}</span>)}</div>
    <div className="flex-1" />
    <span className="tracking-[.1px] text-[#858585]">Parent class:</span>
    <span className="mt-px ml-[7px] border-b border-dotted border-white text-[12.600px] leading-[15px] tracking-[.05px] text-white">Character</span>
    <SearchBox label="Search For Help" className="ml-[10px] h-[20px] w-[226px] pr-[2px]" />
  </div>
);

/* ---------- taskbar ---------- */
const TaskIcon = ({ kind }) => {
  const svg = {
    lol: <g><rect x="1" y="1" width="22" height="22" fill="#14346e" stroke="#a98a45" strokeWidth="2" /><path d="M4 4Q12 8 20 4V14Q12 10 4 16Z" fill="#1f5fa8" /><path d="M7 4H14V6H12.600V17H17V14H19.500V20H7V18H8.600V6H7Z" fill="#e8c467" /></g>,
    gw: <g><path d="M4 9C4 1 20 0 20 8C20 12 13 15 11 18H21V23H3V19C8 14 13 11 13 8C13 5.500 9.500 5.500 9.500 9Z" fill="#d01722" stroke="#f4e4e4" strokeWidth="1.300" /><path d="M2 15L9 12M15 20L22 17" stroke="#fff" strokeWidth="1.200" /></g>,
    chrome: <g><circle cx="12" cy="12" r="11" fill="#dd4b3e" /><path d="M2.500 6.500L8 15.500L12 23A11 11 0 0 1 2.500 6.500Z" fill="#2fa14f" /><path d="M12 23L17 14.500L16 8H22.300A11 11 0 0 1 12 23Z" fill="#fdd13a" /><circle cx="12" cy="12" r="5.200" fill="#fff" /><circle cx="12" cy="12" r="4.100" fill="#4285f4" /></g>,
    git: <g><circle cx="12" cy="12" r="11.500" fill="#f4f1f7" /><path d="M5 5L9 7H15L19 5V11C20.500 17 16 19.500 12 19.500C8 19.500 3.500 17 5 11Z" fill="#3d2460" /></g>,
    epic: <g><path d="M2 0H22V20L12 24L2 20Z" fill="#3b3b3b" stroke="#b9b9b9" strokeWidth="1" /><text x="12" y="12.500" textAnchor="middle" fontFamily="Roboto Condensed, Roboto" fontWeight="700" fontSize="11" fill="#fff">EPIC</text><text x="12" y="18" textAnchor="middle" fontFamily="Roboto Condensed, Roboto" fontSize="4.500" fill="#ddd">GAMES</text></g>,
    folder: <g><path d="M2 2H9L11 4H22V21H2Z" fill="#f5cf62" /><path d="M2 8H22V21H2Z" fill="#fbe191" /><path d="M5 23V14H19V23H15V18H9V23Z" fill="#2fa6dd" /></g>,
    paint: <g><ellipse cx="11" cy="13" rx="10" ry="9" fill="#cfe0ee" /><circle cx="6" cy="11" r="1.900" fill="#d94b3d" /><circle cx="7" cy="16" r="1.900" fill="#3fa24c" /><circle cx="11" cy="8.500" r="1.900" fill="#e8b52c" /><circle cx="12" cy="17.500" r="1.900" fill="#3c76c8" /><path d="M21 1L15 13L14 21L18 15L23 4Z" fill="#d98a36" /></g>,
  }[kind];
  return <svg viewBox="0 0 24 24" className="h-[24px] w-[24px]">{svg}</svg>;
};
const apps = [["lol"], ["gw"], ["edge"], ["chrome", 1], ["skype", 1], ["git", 1], ["epic", 1], ["folder", 1], ["paint", 1], ["ue", 2]];
const Tray = ({ children }) => <div className="flex h-full w-[24px] shrink-0 items-center justify-center"><svg viewBox="0 0 18 18" className="h-[18px] w-[18px]" fill="none">{children}</svg></div>;
const Taskbar = () => (
  <div className="flex h-[40px] shrink-0 bg-[linear-gradient(90deg,#050202_0,#120504_25%,#0a0303_65%,#1f0803_80%,#1c0803_88%,#0a0403_100%)] font-['Open_Sans','Noto_Sans',sans-serif]">
    <div className="flex w-[48px] items-center justify-center"><FaWindows className="h-[17px] w-[17px] text-white" /></div>
    <div className="flex w-[344px] items-center bg-[#333] pl-[9px]">
      <div className="h-[22px] w-[22px] rounded-full border-[3px] border-white" />
      <span className="ml-[9px] flex-1 text-[14px] text-[#a0a0a0]">Frag mich etwas</span>
      <svg viewBox="0 0 12 18" className="mr-[15px] h-[17px] w-[12px]" fill="none" stroke="#aaa" strokeWidth="1.200"><rect x="3.500" y="1" width="5" height="10" rx="2.500" /><path d="M1 8V10Q1 13.500 6 13.500Q11 13.500 11 10V8M6 13.500V17M3 17H9" /></svg>
    </div>
    <div className="flex w-[49px] items-center justify-center"><svg viewBox="0 0 22 16" className="h-[16px] w-[20px]" fill="none" stroke="#fff" strokeWidth="1.400"><rect x="5.500" y="1.500" width="11" height="13" /><path d="M3.500 3.500H1V12.500H3.500M18.500 3.500H21V12.500H18.500" /></svg></div>
    {apps.map(([k, s]) => (
      <div key={k} className={`flex h-[40px] w-[49px] flex-col items-center ${s === 2 ? "bg-[#383232]" : ""}`}>
        <div className="flex flex-1 items-center justify-center pt-[2px]">
          {k === "edge" ? <FaEdgeLegacy className="h-[21px] w-[21px] text-[#1a7bd6]" /> : k === "skype" ? <FaSkype className="h-[24px] w-[24px] text-[#18a8e8]" /> : k === "ue" ? <SiUnrealengine className="h-[23px] w-[23px] text-[#e6e6e6]" /> : <TaskIcon kind={k} />}
        </div>
        <div className={`h-[2px] ${s === 2 ? "w-[49px] bg-[#86b0f0]" : s ? "w-[40px] bg-[#86b0f0]" : "w-[40px]"}`} />
      </div>
    ))}
    <div className="flex-1" />
    <div className="flex items-center pr-[3px]">
      <Tray><path d="M1 6H4L10 1V17L4 12H1Z" fill="#e0633f" /><path d="M13 4Q15.500 9 13 14" stroke="#5a241a" strokeWidth="1.300" /></Tray>
      <Tray><path d="M4 6L9 4L14 9L11 14L5 12Z" fill="#c8402f" /><circle cx="4" cy="13.500" r="2.600" fill="#9a9a9a" /><circle cx="13.500" cy="13" r="2.800" fill="#ccc" /><path d="M9 7L12 2M3 9L7 7" stroke="#ddd" strokeWidth="1.700" /></Tray>
      <Tray><path d="M3 14Q0 13 2 9.500Q3 4 8 4Q11 4 12 7Q17 7.500 16.500 12Q16 14 14 14Z" fill="#fff" /><path d="M6 13.500Q4.500 9 10 8" stroke="#120504" strokeWidth="1.200" /></Tray>
      <Tray><rect width="18" height="18" fill="#050505" /><path d="M13 3.500Q6 2 5.500 5Q6 7.500 10 8.500Q14 10 12 13Q8 16 5 13.500M3 7L9 4.500M8 8.500L15 7M3 11L9 10.500M4 16L13 13.500" stroke="#fff" strokeWidth="1.300" /></Tray>
      <div className="relative flex w-[24px] items-center justify-center"><FaDropbox className="h-[17px] w-[17px] text-white" /><span className="absolute right-[2px] bottom-[-1px] h-[8px] w-[8px] rounded-full bg-[#35a853]" /></div>
      <Tray><path d="M3 2Q8 -1 14 4Q16 10 16.500 16Q10 19 4 13Q2 8 3 2Z" fill="#7fba00" /><path d="M5.500 9L8.200 11.700L12.800 6.500" stroke="#fff" strokeWidth="2" /></Tray>
      <Tray><path d="M5 3.500H17V12.500H5ZM11 12.500V16M7 16H15M1 1V6H4.500V1ZM2.700 6V16" stroke="#fff" strokeWidth="1.200" /></Tray>
      <Tray><path d="M1.500 6.500H4L8 3V15L4 11.500H1.500Z" stroke="#fff" strokeWidth="1.200" /><path d="M10.500 6.500Q12 9 10.500 11.500M12.800 4.800Q15.500 9 12.800 13.200" stroke="#fff" strokeWidth="1.200" /><path d="M15 3Q18.500 9 15 15" stroke="#777" strokeWidth="1.200" /></Tray>
      <Tray><path d="M1.500 1.500H16.500V13.500H11L9 16.500L7 13.500H1.500ZM4.500 5H13.500M4.500 7.700H13.500M4.500 10.400H10" stroke="#fff" strokeWidth="1.300" /></Tray>
      <span className="ml-[7px] w-[36px] text-[11.400px] tracking-[-.2px] text-white">DEU</span>
      <div className="w-[62px] text-center text-[11.200px] leading-[18px] tracking-[-.25px] text-white"><div>17:57</div><div>02.10.2015</div></div>
      <div className="ml-[7px] h-[40px] w-px bg-[#55504f]" />
    </div>
  </div>
);

export default function App() {
  return (
    <div className="flex h-[1080px] w-[1920px] flex-col overflow-hidden bg-[#202020] font-[Roboto,sans-serif]">
      <svg className="absolute h-0 w-0"><defs>
        <linearGradient id="fn" gradientUnits="userSpaceOnUse" x1="0" y1="0" x2="0" y2="18"><stop offset="0" stopColor="#dde4fb" /><stop offset="1" stopColor="#8498da" /></linearGradient>
        <linearGradient id="cap" x2="1" y2="0"><stop stopColor="#2f5f86" /><stop offset=".4" stopColor="#6fa8d0" /><stop offset="1" stopColor="#2c5577" /></linearGradient>
        <radialGradient id="ball" cx=".4" cy=".35"><stop stopColor="#fff" /><stop offset="1" stopColor="#8d8d8d" /></radialGradient>
        <linearGradient id="org" x2="0" y2="1"><stop stopColor="#f0a05a" /><stop offset="1" stopColor="#cf7a30" /></linearGradient>
        <radialGradient id="lens" cx=".6" cy=".25"><stop stopColor="#e8e8e8" /><stop offset=".5" stopColor="#777" /><stop offset="1" stopColor="#2a2a2a" /></radialGradient>
        <linearGradient id="blu" x2="1" y2="1"><stop stopColor="#9db2ea" /><stop offset="1" stopColor="#566fae" /></linearGradient>
        <linearGradient id="ply" x2="1" y2="1"><stop stopColor="#f2f5fd" /><stop offset="1" stopColor="#8fa6dc" /></linearGradient>
      </defs></svg>
      <TitleBar />
      <MenuBar />
      <div className="flex min-h-0 flex-1 gap-[5px] pt-px pl-[6px]">
        <div className="flex w-[285px] flex-col">
          <PanelTab icon={<SmallIcon kind="components" />} label="Components" />
          <ComponentsPanel />
          <div className="h-[6px]" />
          <PanelTab icon={<Book className="h-[15px] w-[16px]" />} label="My Blueprint" />
          <BlueprintPanel />
        </div>
        <Centre />
        <Details />
      </div>
      <div className="h-[6px] shrink-0 border-b border-[#5c5c5c] bg-[repeating-linear-gradient(135deg,#181818_0,#181818_9px,#242424_11px,#242424_23px,#181818_25.500px)]" />
      <Taskbar />
    </div>
  );
}
